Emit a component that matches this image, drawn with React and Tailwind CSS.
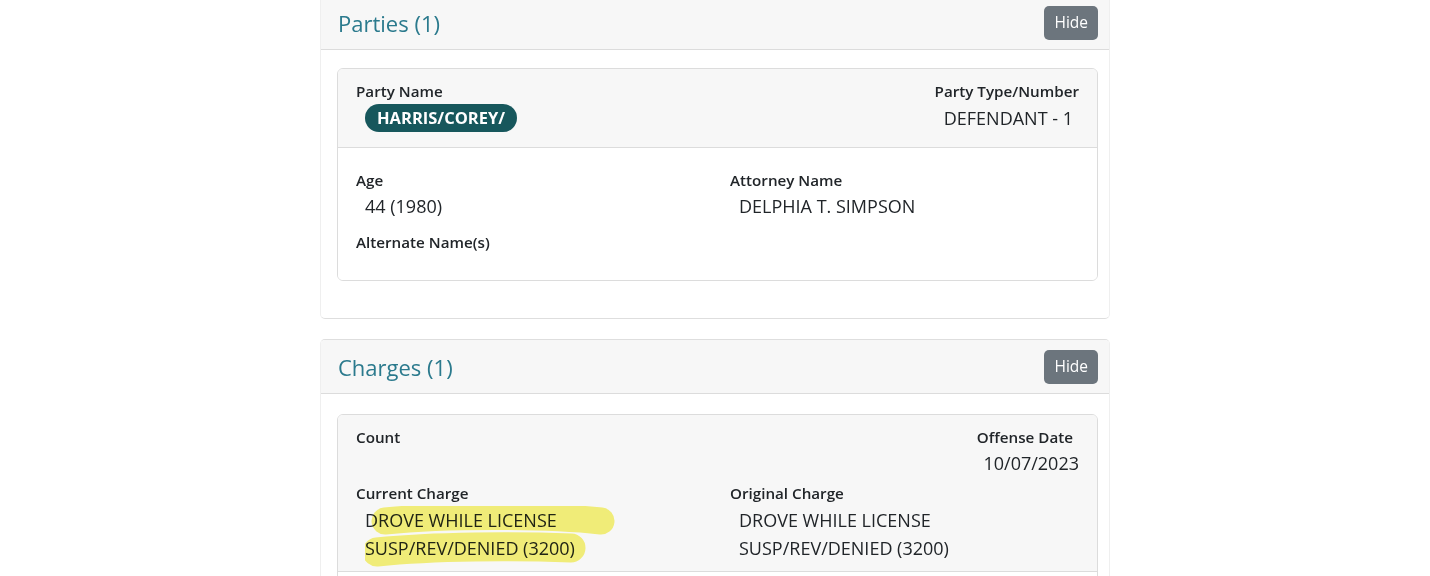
const font = { fontFamily: '"Open Sans", "Noto Sans", sans-serif' };

const SectionHeader = ({ title }) => (
  <div className="flex items-center justify-between h-[54px] pl-[17px] pr-[11px] bg-[#f7f7f7] border-b border-[#dcdcdc]">
    <h2 className="text-[22px] font-medium text-[#2b7a8d] leading-none">{title}</h2>
    <button className="h-[34px] px-[10px] rounded-[5px] bg-[#6c757d] text-white text-[15.5px]">Hide</button>
  </div>
);

const Label = ({ children, className = '' }) => (
  <div className={`text-[15.2px] font-semibold text-[#212529] leading-[24px] ${className}`}>{children}</div>
);

const Value = ({ children, className = '' }) => (
  <div className={`text-[18px] text-[#212529] leading-[28px] ${className}`}>{children}</div>
);

const Highlight = () => (
  <svg className="absolute left-0 top-0 pointer-events-none mix-blend-multiply" width="260" height="70" viewBox="0 0 260 70">
    <path d="M20 15 C 80 9, 180 9, 236 15" stroke="#f8f47c" strokeWidth="27" strokeLinecap="round" fill="none" />
    <path d="M12 46 C 70 40, 150 40, 206 42" stroke="#f8f47c" strokeWidth="29" strokeLinecap="round" fill="none" />
  </svg>
);

export default function App() {
  return (
    <div className="min-h-screen bg-white" style={font}>
      <div className="w-[790px] ml-[320px] -mt-[5px]">
        <div className="border border-[#dedede] border-x-[#efefef] rounded-[5px] overflow-hidden">
          <SectionHeader title="Parties (1)" />
          <div className="pt-[18px] pb-[37px] pl-[16px] pr-[11px]">
            <div className="border border-[#dcdcdc] rounded-[6px] overflow-hidden">
              <div className="flex justify-between bg-[#f7f7f7] border-b border-[#dcdcdc] px-[18px] pt-[10px] pb-[15px]">
                <div>
                  <Label>Party Name</Label>
                  <div className="mt-[1px] ml-[9px] inline-block h-[28px] px-[12px] rounded-full bg-[#17575c] text-white font-bold text-[16.5px] leading-[28px]">
                    HARRIS/COREY/
                  </div>
                </div>
                <div className="text-right">
                  <Label>Party Type/Number</Label>
                  <Value className="mr-[6px] mt-[1px]">DEFENDANT - 1</Value>
                </div>
              </div>
              <div className="grid grid-cols-[374px_1fr] px-[18px] pt-[20px] pb-[26px] bg-white">
                <div>
                  <Label>Age</Label>
                  <Value className="ml-[9px]">44 (1980)</Value>
                  <Label className="mt-[10px]">Alternate Name(s)</Label>
                </div>
                <div>
                  <Label>Attorney Name</Label>
                  <Value className="ml-[9px]">DELPHIA T. SIMPSON</Value>
                </div>
              </div>
            </div>
          </div>
        </div>

        <div className="mt-[20px] border border-[#dedede] border-x-[#efefef] rounded-[5px] overflow-hidden">
          <SectionHeader title="Charges (1)" />
          <div className="pt-[20px] pb-[30px] pl-[16px] pr-[11px]">
            <div className="border border-[#dcdcdc] rounded-[6px] overflow-hidden">
              <div className="bg-[#f7f7f7] border-b border-[#dcdcdc] px-[18px] pt-[10px] pb-[9px]">
                <div className="flex justify-between">
                  <Label>Count</Label>
                  <div className="text-right">
                    <Label className="mr-[6px]">Offense Date</Label>
                    <Value>10/07/2023</Value>
                  </div>
                </div>
                <div className="grid grid-cols-[374px_1fr] mt-[4px]">
                  <div>
                    <Label>Current Charge</Label>
                    <div className="relative ml-[9px] mt-[1px]">
                      <Value>DROVE WHILE LICENSE</Value>
                      <Value>SUSP/REV/DENIED (3200)</Value>
                      <Highlight />
                    </div>
                  </div>
                  <div>
                    <Label>Original Charge</Label>
                    <div className="ml-[9px] mt-[1px]">
                      <Value>DROVE WHILE LICENSE</Value>
                      <Value>SUSP/REV/DENIED (3200)</Value>
                    </div>
                  </div>
                </div>
              </div>
              <div className="bg-white h-[60px]" />
            </div>
          </div>
        </div>
      </div>
    </div>
  );
}
